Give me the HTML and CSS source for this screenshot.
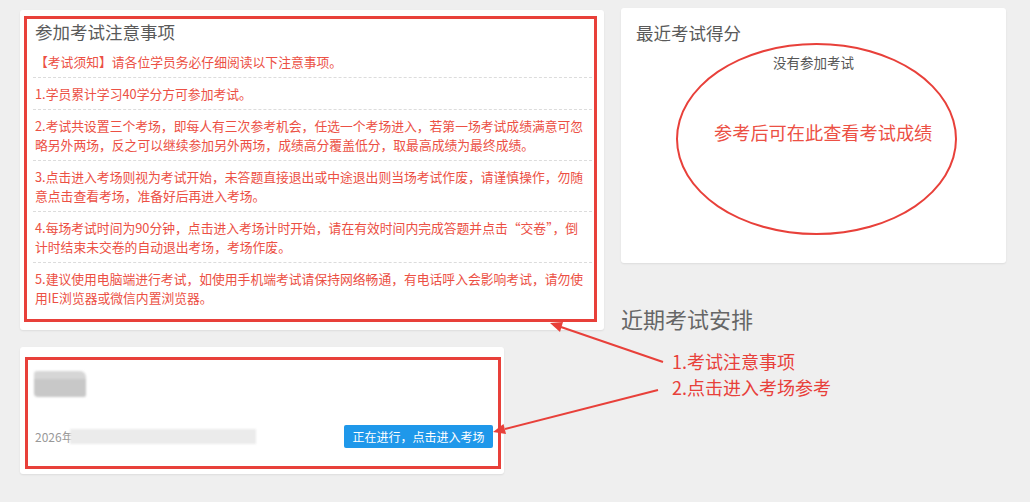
FILE: index.html
```html
<!DOCTYPE html>
<html lang="zh-CN">
<head>
<meta charset="utf-8">
<title>考试</title>
<link rel="stylesheet" href="styles.css">
</head>
<body>
<div class="page">
  <div class="col-left">
    <section class="card notice-card">
      <div class="mark notice">
        <h3 class="card-title">参加考试注意事项</h3>
        <ul class="rules">
          <li>【考试须知】请各位学员务必仔细阅读以下注意事项。</li>
          <li>1.学员累计学习40学分方可参加考试。</li>
          <li>2.考试共设置三个考场，即每人有三次参考机会，任选一个考场进入，若第一场考试成绩满意可忽<br>略另外两场，反之可以继续参加另外两场，成绩高分覆盖低分，取最高成绩为最终成绩。</li>
          <li>3.点击进入考场则视为考试开始，未答题直接退出或中途退出则当场考试作废，请谨慎操作，勿随<br>意点击查看考场，准备好后再进入考场。</li>
          <li>4.每场考试时间为90分钟，点击进入考场计时开始，请在有效时间内完成答题并点击“交卷”，倒<br>计时结束未交卷的自动退出考场，考场作废。</li>
          <li>5.建议使用电脑端进行考试，如使用手机端考试请保持网络畅通，有电话呼入会影响考试，请勿使<br>用IE浏览器或微信内置浏览器。</li>
        </ul>
      </div>
    </section>
    <section class="card exam-card">
      <div class="mark exam">
        <div class="exam-name"></div>
        <div class="exam-row">
          <div class="exam-date">2026年<span class="blur-bar"></span></div>
          <button class="enter-btn">正在进行，点击进入考场</button>
        </div>
      </div>
    </section>
  </div>
  <div class="col-right">
    <section class="card score-card">
      <h3 class="card-title">最近考试得分</h3>
      <p class="empty">没有参加考试</p>
      <div class="ellipse"></div>
      <p class="ellipse-note">参考后可在此查看考试成绩</p>
    </section>
    <h2 class="plan-title">近期考试安排</h2>
  </div>

  <svg class="arrows" width="1030" height="502" viewBox="0 0 1030 502">
    <line x1="663" y1="362" x2="561" y2="327" stroke="#e8403a" stroke-width="2"/>
    <polygon points="550,323 563,322 560,332" fill="#e8403a"/>
    <line x1="658" y1="390" x2="505" y2="429" stroke="#e8403a" stroke-width="2"/>
    <polygon points="493,432 503.5,424 506,434" fill="#e8403a"/>
  </svg>
  <div class="annot annot-1">1.考试注意事项</div>
  <div class="annot annot-2">2.点击进入考场参考</div>
</div>
</body>
</html>
```

FILE: styles.css
```css
* { box-sizing: border-box; }
html, body { margin: 0; padding: 0; }
body {
  background: #efefef;
  font-family: "Noto Sans CJK SC", "Liberation Sans", sans-serif;
  width: 1030px;
  height: 502px;
  overflow: hidden;
}
.page {
  position: relative;
  display: flex;
  gap: 17px;
  padding: 8px 0 0 20px;
  height: 502px;
}
.col-left {
  width: 584px;
  display: flex;
  flex-direction: column;
  gap: 17px;
  margin-top: 2px;
}
.col-right {
  width: 385px;
  display: flex;
  flex-direction: column;
}
.card {
  background: #fff;
  border-radius: 3px;
  box-shadow: 0 1px 2px rgba(0,0,0,0.08);
}
.mark {
  border: 3px solid #e8403a;
}
.card-title {
  margin: 0;
  font-size: 17.5px;
  font-weight: normal;
  line-height: 26px;
  color: #5a5a5a;
}

/* notice card */
.notice-card {
  height: 320px;
  padding: 6px 7px 8px 4px;
}
.notice {
  height: 100%;
  padding: 0 2px 0 6px;
}
.notice .card-title { padding-left: 2px; margin-bottom: 1px; }
.rules {
  list-style: none;
  margin: 0;
  padding: 0;
}
.rules li {
  font-size: 12.8px;
  line-height: 19px;
  color: #ec5044;
  padding: 6px 0 6px 2px;
  border-bottom: 1px dashed #dcdcdc;
  white-space: nowrap;
}
.rules li:last-child { border-bottom: none; }

/* exam card */
.exam-card {
  width: 484px;
  height: 127px;
  padding: 10px 3px 5px 5px;
}
.exam {
  height: 100%;
  padding: 11px 5px 0 6px;
}
.exam-name {
  width: 52px;
  height: 26px;
  background: linear-gradient(#d6d6d6 0 30%, #c8c8c8 30% 100%);
  border-radius: 3px 6px 2px 4px;
  filter: blur(1px);
}
.exam-row {
  display: flex;
  justify-content: space-between;
  align-items: center;
  margin-top: 28px;
}
.exam-date {
  display: flex;
  align-items: center;
  font-size: 12px;
  color: #999;
  padding-left: 1px;
}
.blur-bar {
  display: inline-block;
  width: 186px;
  height: 15px;
  margin-left: -4px;
  background: #ebebeb;
  filter: blur(1px);
}
.enter-btn {
  width: 149px;
  height: 23px;
  border: none;
  border-radius: 2px;
  background: #1f98ea;
  color: #fff;
  font-family: inherit;
  font-size: 12px;
  padding: 0;
}

/* score card */
.score-card {
  position: relative;
  height: 255px;
  padding: 12px 15px 0;
}
.empty {
  margin: 6px 0 0;
  text-align: center;
  font-size: 13.5px;
  line-height: 20px;
  color: #555;
}
.ellipse {
  position: absolute;
  left: 55px;
  top: 35px;
  width: 281px;
  height: 192px;
  border: 2.5px solid #e8403a;
  border-radius: 50%;
}
.ellipse-note {
  position: absolute;
  left: 93px;
  top: 112px;
  margin: 0;
  font-size: 18.2px;
  line-height: 24px;
  color: #ec5044;
  white-space: nowrap;
}
.plan-title {
  margin: 40px 0 0;
  font-size: 22px;
  font-weight: normal;
  line-height: 30px;
  color: #666;
}

/* annotations overlay */
.arrows {
  position: absolute;
  left: 0;
  top: 0;
  pointer-events: none;
}
.annot {
  position: absolute;
  left: 672px;
  font-size: 18px;
  line-height: 24px;
  color: #e8403a;
  white-space: nowrap;
}
.annot-1 { top: 349px; }
.annot-2 { top: 375px; }
```
